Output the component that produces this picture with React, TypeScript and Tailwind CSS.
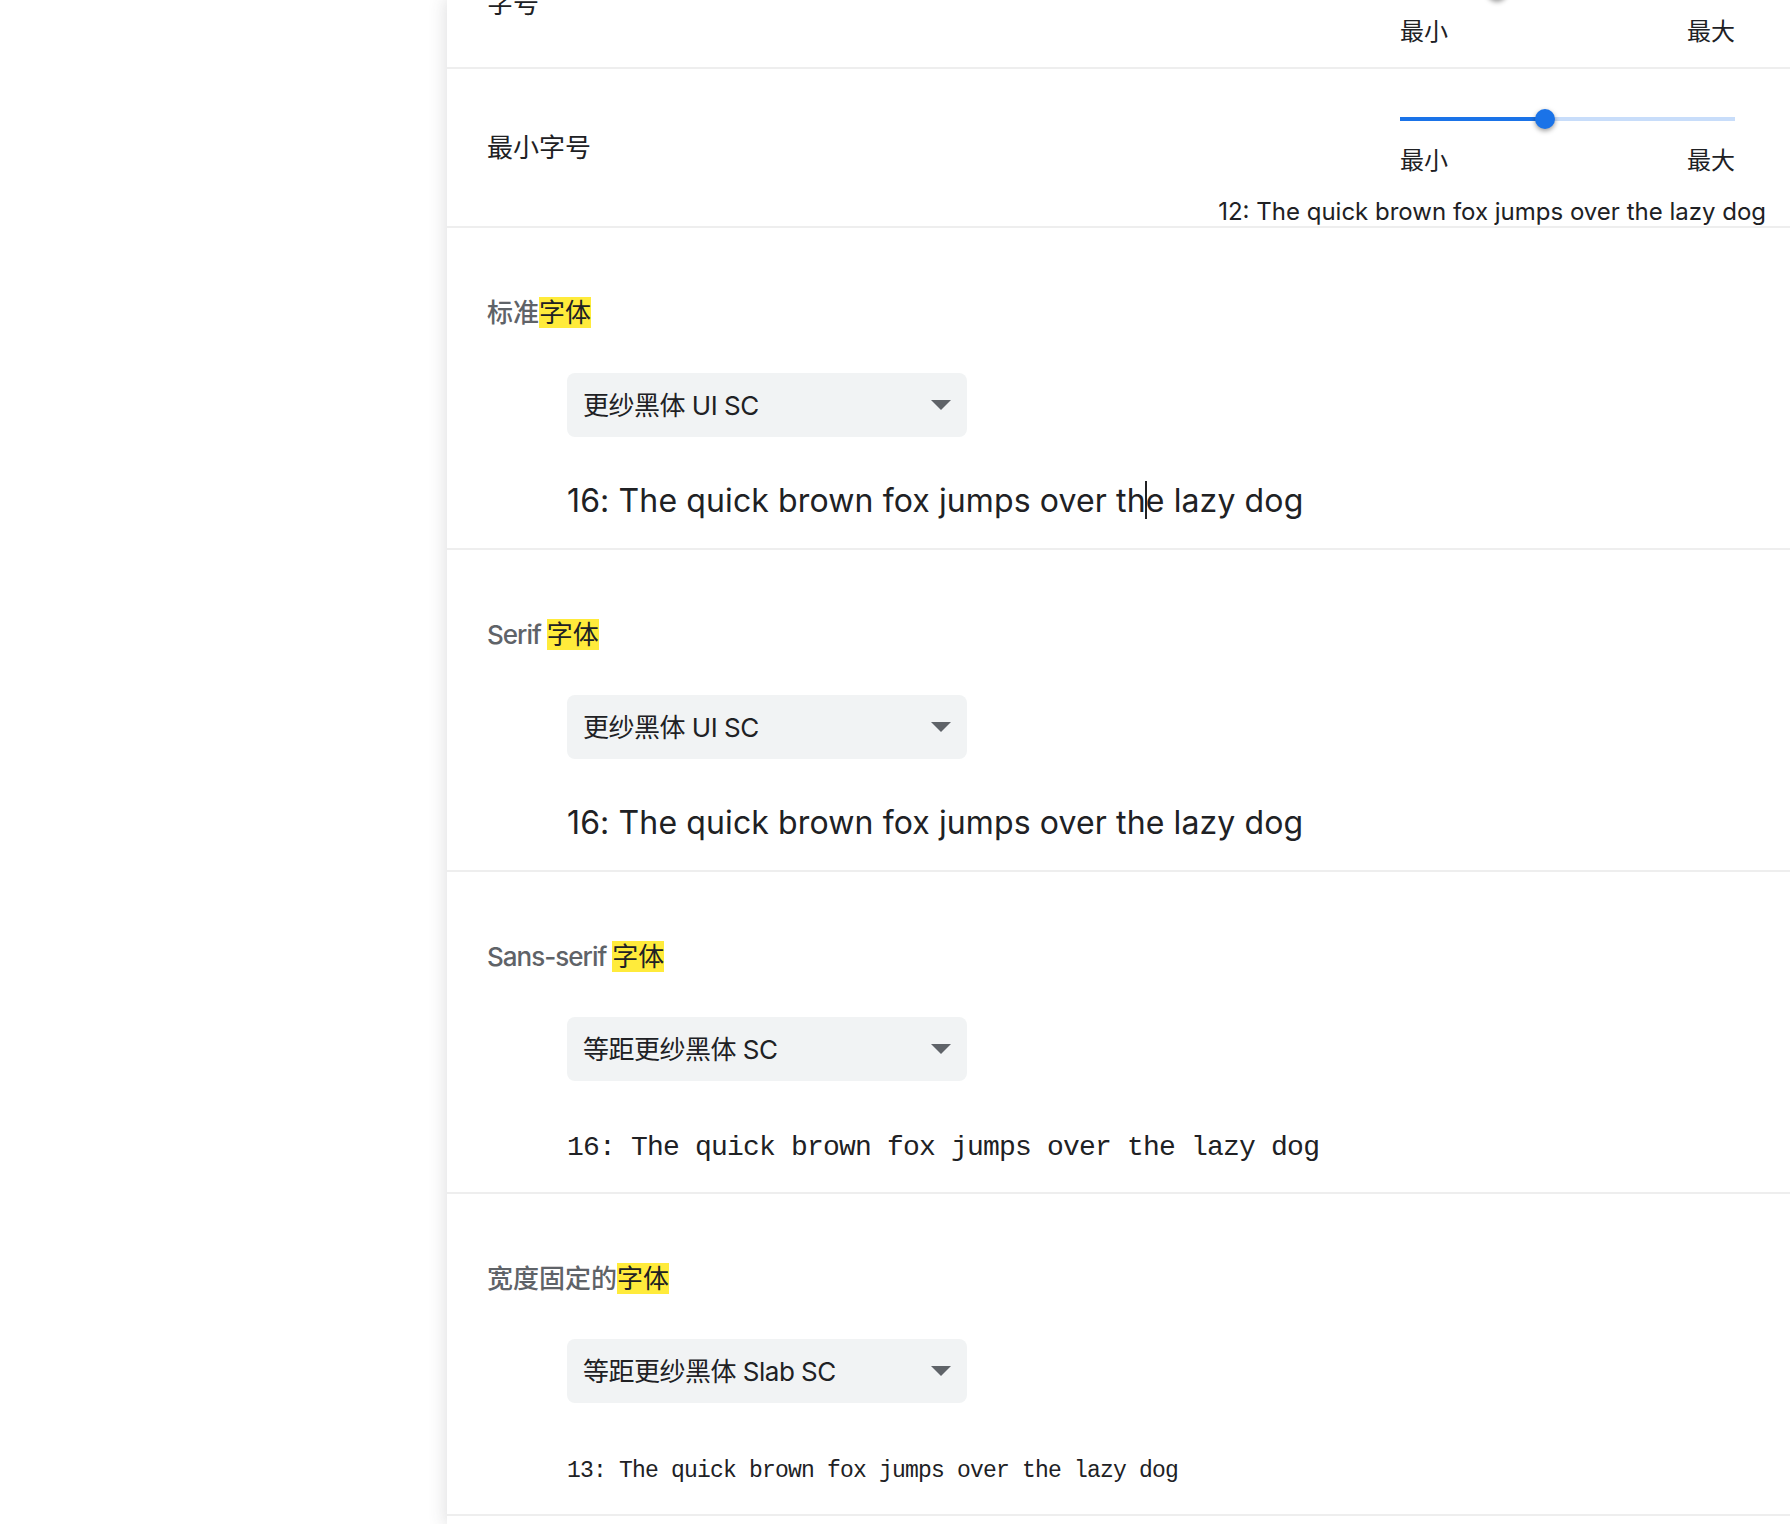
import React from "react";

const ui = "font-['Inter','Noto_Sans_CJK_SC',sans-serif]";

const fontSections = [
  { id: "standard", pre: "标准", latin: false, hit: "字体", font: "更纱黑体 UI SC", kind: "ui", caret: true },
  { id: "serif", pre: "Serif ", latin: true, hit: "字体", font: "更纱黑体 UI SC", kind: "ui", caret: false },
  { id: "sans", pre: "Sans-serif ", latin: true, hit: "字体", font: "等距更纱黑体 SC", kind: "mono", caret: false },
  { id: "fixed", pre: "宽度固定的", latin: false, hit: "字体", font: "等距更纱黑体 Slab SC", kind: "fixed", caret: false },
];

const sampleClass: Record<string, string> = {
  ui: "ml-[80px] mt-[44px] text-[32px] leading-[40px] tracking-[0.12px] text-[#202124] font-['Inter','Noto_Sans_CJK_SC',sans-serif]",
  mono: "ml-[80px] mt-[47px] text-[28px] leading-[40px] tracking-[-0.8px] text-[#202124] font-['Liberation_Mono','DejaVu_Sans_Mono',monospace]",
  fixed: "ml-[80px] mt-[48px] text-[23px] leading-[40px] tracking-[-0.8px] text-[#202124] font-['Liberation_Mono','DejaVu_Sans_Mono',monospace]",
};

function Slider({ pos }: { pos: number }) {
  return (
    <div className="w-[335px]">
      <div className="relative h-[20px]">
        <div className="absolute left-0 right-0 top-[8px] h-[4px] bg-[#c8ddfa]" />
        <div className="absolute left-0 top-[8px] h-[4px] bg-[#1a73e8]" style={{ width: pos }} />
        <div
          className="absolute top-0 h-[20px] w-[20px] rounded-full bg-[#1a73e8] shadow-[0_2px_5px_rgba(0,0,0,0.4)]"
          style={{ left: pos - 10 }}
        />
      </div>
      <div className="mt-[12px] flex justify-between text-[24px] leading-[39px] text-[#202124]">
        <span>最小</span>
        <span>最大</span>
      </div>
    </div>
  );
}

function FontSelect({ label }: { label: string }) {
  return (
    <div className="ml-[80px] mt-[44px] flex h-[64px] w-[400px] items-center justify-between rounded-[8px] bg-[#f1f3f4] pl-[16px] pr-[16px] text-[26px] tracking-[-0.5px] text-[#202124]">
      <span>{label}</span>
      <svg width="20" height="10" viewBox="0 0 20 10">
        <polygon points="0,0 20,0 10,10" fill="#5f6368" />
      </svg>
    </div>
  );
}

export default function App() {
  return (
    <div className={`flex h-[1524px] w-[1790px] overflow-hidden bg-white ${ui}`}>
      <div className="w-[447px] shrink-0" />
      <div className="flex-1 bg-white shadow-[0_0_16px_2px_rgba(60,64,67,0.16)]">
        <div className="-mt-[61px] flex h-[130px] items-center justify-between border-b-2 border-[#eeeeee] pl-[40px]">
          <div className="text-[26px] leading-[39px] text-[#202124]">字号</div>
          <div className="self-start pr-[55px] pt-[41px]">
            <Slider pos={97} />
          </div>
        </div>

        <div className="flex h-[159px] items-center justify-between border-b-2 border-[#eeeeee] pl-[40px]">
          <div className="text-[26px] leading-[39px] text-[#202124]">最小字号</div>
          <div className="flex flex-col items-end self-start pr-[24px] pt-[40px]">
            <div className="mr-[31px]">
              <Slider pos={145} />
            </div>
            <div className="mt-[17px] text-[24px] leading-[29px] text-[#202124]">
              12: The quick brown fox jumps over the lazy dog
            </div>
          </div>
        </div>

        {fontSections.map((s) => (
          <section key={s.id} className="h-[322px] border-b-2 border-[#eeeeee] pl-[40px] pt-[69px]">
            <div className="text-[26px] font-medium leading-[32px] text-[#5f6368]">
              <span className={s.latin ? "tracking-[-1px]" : ""}>{s.pre}</span>
              <span className="bg-[#ffeb3b] font-normal text-[#202124]">{s.hit}</span>
            </div>
            <FontSelect label={s.font} />
            <div className={sampleClass[s.kind]}>
              {s.caret ? (
                <>
                  16: The quick brown fox jumps over t
                  <span className="relative">
                    h
                    <span className="absolute right-[-1px] top-0 h-[38px] w-[2px] bg-[#202124]" />
                  </span>
                  e lazy dog
                </>
              ) : s.kind === "fixed" ? (
                "13: The quick brown fox jumps over the lazy dog"
              ) : (
                "16: The quick brown fox jumps over the lazy dog"
              )}
            </div>
          </section>
        ))}
      </div>
    </div>
  );
}
